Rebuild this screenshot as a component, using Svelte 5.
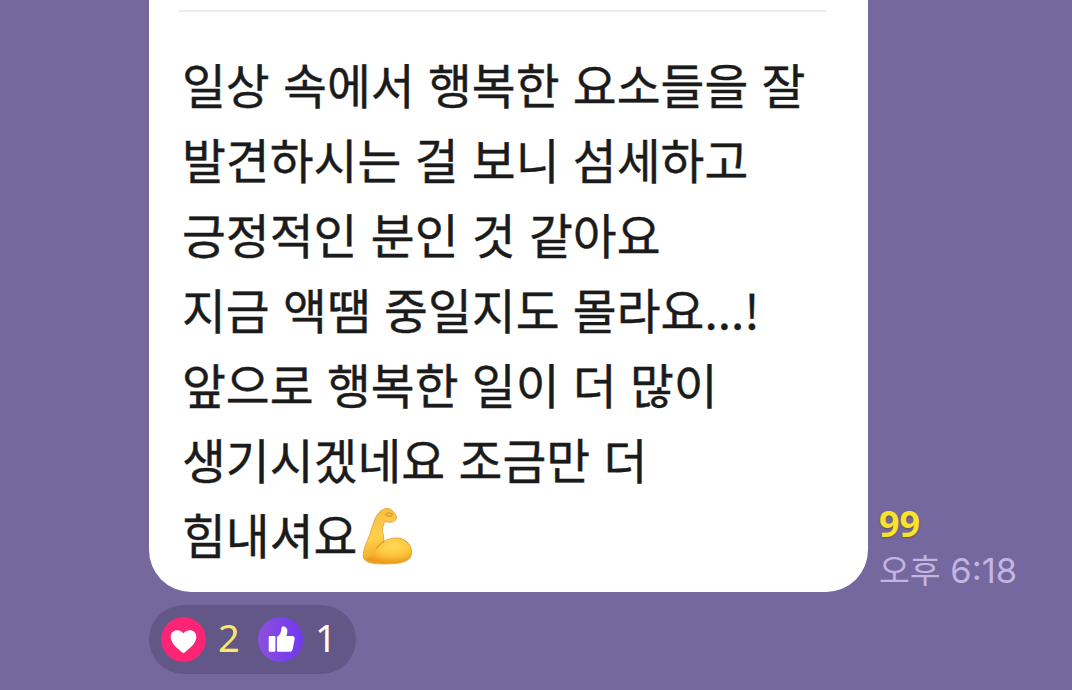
<script>
let lines = [
    "일상 속에서 행복한 요소들을 잘",
    "발견하시는 걸 보니 섬세하고",
    "긍정적인 분인 것 같아요",
    "지금 액땜 중일지도 몰라요...!",
    "앞으로 행복한 일이 더 많이",
    "생기시겠네요 조금만 더",
    "힘내셔요"
]

let unread = $state(99)
let hearts = $state(2)
let likes = $state(1)
</script>

<main>
    <div class="row">
        <article class="bubble">
            <hr>
            <div class="text">
                {#each lines as line, i}
                <p>
                    <span>{line}</span>
                    {#if i === lines.length - 1}
                    <svg class="arm" viewBox="0 0 52 60" aria-hidden="true">
                        <defs>
                            <linearGradient id="skin" x1="0" y1="0" x2="0.25" y2="1">
                                <stop offset="0" stop-color="#f3bb40" />
                                <stop offset="0.55" stop-color="#ffd04a" />
                                <stop offset="1" stop-color="#f0a01f" />
                            </linearGradient>
                            <radialGradient id="muscle" cx="0.6" cy="0.3" r="0.7">
                                <stop offset="0" stop-color="#ffda58" />
                                <stop offset="0.55" stop-color="#fdc53c" />
                                <stop offset="1" stop-color="#ec9b1d" />
                            </radialGradient>
                        </defs>
                        <path fill="url(#skin)" stroke="#dc9a2b" stroke-width="0.8" d="M13 13C15 7 19 3 24 1.500C28 1 31 3 33 6C35 8 36 11 34.500 13C32 16 28 16 24 14.500C22 17 20.500 21 21 25C22 29 22 32 22.500 35C29 31 38 30 44 34C50 38 52 45 49.500 51C46 57 34 58 22 58C12 58 4 57 1.500 52C.5 46 3 40 6 33C9 26 10 20 13 13Z" />
                        <path fill="url(#muscle)" d="M15 44C20 34 31 30.500 41 33.500C49 37 52 44 49 50C46 56 36 57 25 57C15 57 6 56 3 52C9 53 12 49 15 44Z" />
                        <path class="crease" d="M15 42C17 39 19 37 22.500 35M24 8C25 5.500 29 5 31 7.500C31 9.500 27 10 25 8.500" />
                    </svg>
                    {/if}
                </p>
                {/each}
            </div>
        </article>
        <aside>
            <b>{unread}</b>
            <time><span>오후</span> 6<i>:</i>18</time>
        </aside>
    </div>

    <div class="reactions">
        <svg viewBox="0 0 44 44" aria-hidden="true">
            <circle cx="22" cy="22" r="22" fill="#fb2575" />
            <path fill="#fff" d="M22 35.500C18 32 9.500 26.500 9.500 19.500C9.500 12 18 11 22 16C26 11 34.500 12 34.500 19.500C34.500 26.500 26 32 22 35.500Z" />
        </svg>
        <span class="mine">{hearts}</span>
        <svg viewBox="0 0 44 44" aria-hidden="true">
            <defs>
                <linearGradient id="violet">
                    <stop offset="0" stop-color="#8c50dd" />
                    <stop offset="1" stop-color="#7138ee" />
                </linearGradient>
            </defs>
            <circle cx="22" cy="22" r="22" fill="url(#violet)" />
            <rect x="10.500" y="18.500" width="6.500" height="15.500" rx="1" fill="#fff" />
            <path fill="#fff" d="M18.500 19.500C21.500 18 22.500 15.500 22.800 12C23 9.500 24 9 25.500 9.200C29 10 29.500 14 27.800 18.500H33.500C35.500 18.500 36.200 20 35.800 22L34 31C33.500 33.200 32.500 34 30.500 34H20.500C19 34 18.500 33.500 18.500 32Z" />
        </svg>
        <span>{likes}</span>
    </div>
</main>

<style>
:global(body) {
    margin: 0;
    background-color: #74689f;
}

main {
    height: 690px;
    box-sizing: border-box;
    padding-left: 149px;
    overflow: hidden;
    font-family: "Noto Sans CJK KR", sans-serif;
}

.row {
    display: flex;
    align-items: flex-end;
    height: 592px;
}

.bubble {
    box-sizing: border-box;
    width: 719px;
    height: 592px;
    padding: 10px 42px 0 30px;
    border-radius: 0 0 42px 42px;
    background-color: #fff;
}

hr {
    height: 2px;
    margin: 0;
    border: 0;
    background-color: #ebebeb;
}

.text {
    padding: 34px 0 0 3px;
    color: #1b1b1b;
    font-size: 47.7px;
    line-height: 75px;
    word-spacing: 2.6px;
    white-space: nowrap;
    -webkit-text-stroke: 0.4px #1b1b1b;
}

p {
    display: flex;
    align-items: center;
    height: 75px;
    margin: 0;
}

.arm {
    width: 51px;
    height: 59px;
    margin: 5px 0 0 4px;
}

.crease {
    fill: none;
    stroke: #d48718;
    stroke-width: 1;
    stroke-linecap: round;
}

aside {
    display: flex;
    flex-direction: column;
    padding-left: 11px;
}

b {
    height: 46px;
    color: #fae12c;
    font: bold 36px/48px "Noto Sans", sans-serif;
    text-shadow: 0 1px 2px #5f5540;
}

time {
    height: 46px;
    color: #c3b4e2;
    font: 34.5px/46px Inter, sans-serif;
    white-space: nowrap;
}

time span {
    font: 33.5px/46px "Noto Sans CJK KR", sans-serif;
}

i {
    position: relative;
    top: -3px;
    font-style: normal;
}

.reactions {
    display: flex;
    align-items: center;
    box-sizing: border-box;
    width: 207px;
    height: 69px;
    margin-top: 13px;
    padding-left: 12px;
    border-radius: 35px;
    background-color: #625787;
}

.reactions svg {
    flex: none;
    width: 45px;
    height: 45px;
}

.reactions span {
    width: 28px;
    padding: 0 0 5px 12px;
    color: #fff;
    font: 38px/44px "Noto Sans", sans-serif;
    margin-right: 12px;
}

.reactions .mine {
    color: #f9e866;
}
</style>
